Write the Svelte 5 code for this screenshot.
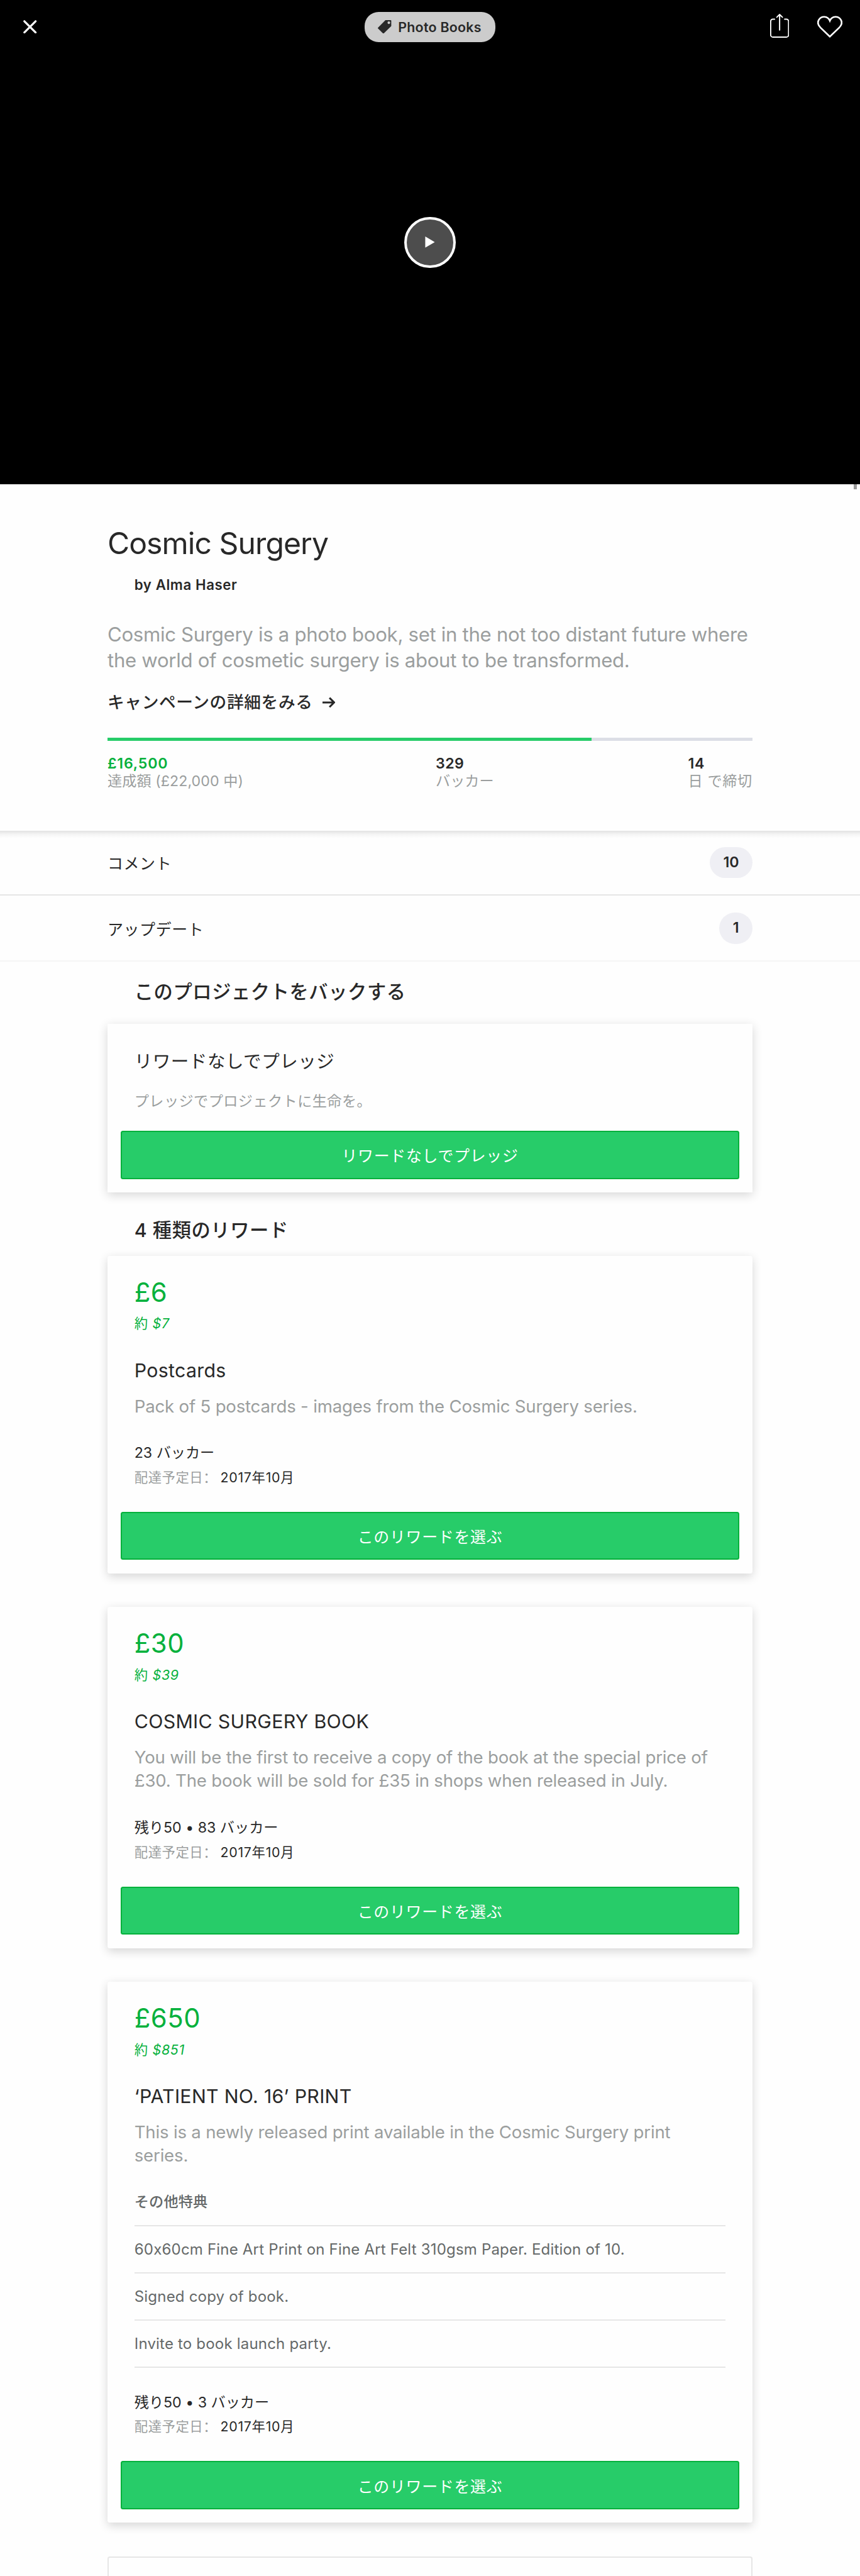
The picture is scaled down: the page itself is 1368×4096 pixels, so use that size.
<script>
  const project = {
    category: 'Photo Books',
    name: 'Cosmic Surgery',
    author: 'by Alma Haser',
    blurb: 'Cosmic Surgery is a photo book, set in the not too distant future where the world of cosmetic surgery is about to be transformed.',
    funded: 75
  };

  const links = [
    { label: 'コメント', count: 10 },
    { label: 'アップデート', count: 1 }
  ];

  const rewards = [
    {
      price: '£6',
      approx: '$7',
      title: 'Postcards',
      desc: 'Pack of 5 postcards - images from the Cosmic Surgery series.',
      extras: [],
      stats: '23 バッカー'
    },
    {
      price: '£30',
      approx: '$39',
      title: 'COSMIC SURGERY BOOK',
      desc: 'You will be the first to receive a copy of the book at the special price of £30. The book will be sold for £35 in shops when released in July.',
      extras: [],
      stats: '残り50 • 83 バッカー'
    },
    {
      price: '£650',
      approx: '$851',
      title: '‘PATIENT NO. 16’ PRINT',
      desc: 'This is a newly released print available in the Cosmic Surgery print series.',
      extras: [
        '60x60cm Fine Art Print on Fine Art Felt 310gsm Paper. Edition of 10.',
        'Signed copy of book.',
        'Invite to book launch party.'
      ],
      stats: '残り50 • 3 バッカー'
    }
  ];
</script>

<div class="page" lang="ja">
  <header class="hero">
    <nav class="topbar">
      <div class="side">
        <svg class="close" width="24" height="24" viewBox="0 0 24 24">
          <path d="M2 2 22 22M22 2 2 22" />
        </svg>
      </div>
      <div class="category">
        <svg width="24" height="24" viewBox="0 0 24 24">
          <path
            fill-rule="evenodd"
            d="M13.6 0H23a1 1 0 0 1 1 1v9.6L10.6 23.7a1 1 0 0 1-1.4 0L.3 15a1 1 0 0 1 0-1.4zM19.7 2.2a2.4 2.4 0 1 0 0 4.8 2.4 2.4 0 0 0 0-4.8z"
          />
        </svg>
        <span>{project.category}</span>
      </div>
      <div class="side end">
        <svg class="share" width="34" height="43" viewBox="0 0 34 43">
          <path d="M8 9.500H5A4 4 0 0 0 1 13.500V37.500a4 4 0 0 0 4 4H29a4 4 0 0 0 4-4V13.500a4 4 0 0 0-4-4H26M17 29V2M12 6 17 1.200 22 6" />
        </svg>
        <svg class="heart" width="45" height="40" viewBox="0 0 45 40">
          <path d="M22.500 37.300 6 21.500C1.500 17 .3 11.500 2.900 7.200 7.200.2 18.500-.300 22.500 9 26.500-.300 37.800.2 42.100 7.200 44.700 11.500 43.500 17 39 21.500z" />
        </svg>
      </div>
    </nav>
    <button class="play" aria-label="再生">
      <svg width="18" height="20" viewBox="0 0 18 20"><path d="M.5 0 17.500 10 .5 20z" /></svg>
    </button>
    <i class="scroll-mark"></i>
  </header>

  <section class="project">
    <h1>{project.name}</h1>
    <p class="author">{project.author}</p>
    <p class="blurb">{project.blurb}</p>
    <a class="details" href="#campaign">
      キャンペーンの詳細をみる
      <svg width="23" height="20" viewBox="0 0 23 20"><path d="M0 10H20M12.500 1.800 20.700 10 12.500 18.200" /></svg>
    </a>
    <div class="progress"><div class="bar" style="width: {project.funded}%"></div></div>
    <dl class="figures">
      <div><dt class="green">£16,500</dt><dd>達成額 (£22,000 中)</dd></div>
      <div><dt>329</dt><dd>バッカー</dd></div>
      <div><dt>14</dt><dd>日 で締切</dd></div>
    </dl>
  </section>

  <section class="links">
    {#each links as link}
      <a class="link" href="#{link.count}">
        <span>{link.label}</span>
        <span class="count">{link.count}</span>
      </a>
    {/each}
  </section>

  <main>
    <h2>このプロジェクトをバックする</h2>
    <article class="card plain">
      <h3>リワードなしでプレッジ</h3>
      <p>プレッジでプロジェクトに生命を。</p>
      <button class="cta">リワードなしでプレッジ</button>
    </article>

    <h2 class="second">4 種類のリワード</h2>
    <div class="rewards">
      {#each rewards as reward}
        <article class="card">
          <div class="body">
            <p class="price">{reward.price}</p>
            <p class="approx">約 <em>{reward.approx}</em></p>
            <h3>{reward.title}</h3>
            <p class="desc">{reward.desc}</p>
            {#if reward.extras.length}
              <ul>
                <li class="label">その他特典</li>
                {#each reward.extras as extra}
                  <li>{extra}</li>
                {/each}
              </ul>
            {/if}
            <p class="stats">{reward.stats}</p>
            <p class="delivery"><span>配達予定日<i lang="zh-Hans">：</i></span>2017年10月</p>
          </div>
          <button class="cta">このリワードを選ぶ</button>
        </article>
      {/each}
      <div class="next"></div>
    </div>
  </main>
</div>

<style>
  :global(body) {
    background: #fefefe;
    overflow: hidden;
  }
  .page {
    --rule: 2.3px;
    zoom: 0.890625;
    width: 1536px;
    height: 4599px;
    overflow: hidden;
    background: #fefefe;
    color: #282828;
    font-family: Inter, 'Noto Sans CJK JP', sans-serif;
    font-feature-settings: 'calt' 0;
    -webkit-font-smoothing: antialiased;
  }
  h1, h2, h3, p, dl, dd, ul {
    margin: 0;
    padding: 0;
    font-weight: 400;
  }
  a {
    color: inherit;
    text-decoration: none;
  }
  svg {
    display: block;
    flex: none;
  }
  button {
    font: inherit;
  }

  .hero {
    position: relative;
    height: 864px;
    background: #000;
    display: flex;
    flex-direction: column;
    align-items: center;
  }
  .topbar {
    box-sizing: border-box;
    width: 100%;
    height: 96px;
    padding: 0 42px;
    display: grid;
    grid-template-columns: 1fr auto 1fr;
    align-items: center;
  }
  .topbar svg {
    fill: none;
    stroke: #fff;
  }
  .side {
    display: flex;
  }
  .side.end {
    justify-content: flex-end;
    gap: 51px;
    margin-right: -11px;
  }
  .topbar .close {
    stroke-width: 3.6;
    stroke-linecap: round;
  }
  .topbar .share {
    stroke-width: 2.2;
    stroke-linecap: round;
    stroke-linejoin: round;
    margin-top: -3px;
  }
  .topbar .heart {
    stroke-width: 3;
  }
  .category {
    box-sizing: border-box;
    width: 234px;
    height: 54px;
    border-radius: 25px;
    background: #ccc;
    display: flex;
    align-items: center;
    padding-left: 24px;
    gap: 12px;
    font-size: 24px;
    font-weight: 600;
    letter-spacing: 0.3px;
    white-space: nowrap;
  }
  .topbar .category svg {
    fill: #282828;
    stroke: none;
  }
  .play {
    box-sizing: border-box;
    width: 91px;
    height: 91px;
    margin: 291px 0 0;
    padding: 0 0 0 1px;
    border: 4.5px solid #fff;
    border-radius: 50%;
    background: #4d4d4d;
    display: flex;
    align-items: center;
    justify-content: center;
  }
  .play svg {
    fill: #fff;
  }
  .scroll-mark {
    position: absolute;
    right: 6px;
    bottom: -10px;
    width: 5px;
    height: 10px;
    background: #9a9a9a;
  }

  .project {
    padding: 73px 192px;
  }
  h1 {
    font-size: 54px;
    line-height: 64px;
    letter-spacing: -1.04px;
  }
  .author {
    margin: 28px 0 0 48px;
    font-size: 25px;
    line-height: 32px;
    font-weight: 600;
    letter-spacing: 0.65px;
  }
  .blurb {
    margin-top: 49px;
    font-size: 35px;
    line-height: 46px;
    letter-spacing: -0.35px;
    color: #9b9e9e;
  }
  .details {
    display: flex;
    align-items: center;
    gap: 17px;
    margin-top: 32px;
    font-size: 30px;
    line-height: 40px;
    font-weight: 500;
    letter-spacing: 0.7px;
  }
  .details svg {
    fill: none;
    stroke: #282828;
    stroke-width: 3.4;
  }
  .progress {
    margin-top: 43px;
    height: 6px;
    background: #dcdee6;
  }
  .bar {
    height: 6px;
    background: #27cc69;
  }
  .figures {
    margin-top: 24px;
    margin-bottom: -1px;
    display: grid;
    grid-template-columns: 586px 451px auto;
    font-size: 26px;
    line-height: 32px;
    white-space: nowrap;
  }
  dt {
    font-weight: 600;
    letter-spacing: 0.6px;
  }
  .green {
    color: #05b13c;
    letter-spacing: 0.9px;
  }
  dd {
    color: #9b9e9e;
    letter-spacing: 0.1px;
  }
  .figures div:last-child dd {
    letter-spacing: 0.7px;
  }

  .links {
    background: linear-gradient(#e2e2e2, #f4f4f4 6px, #fefefe 13px);
  }
  .link {
    box-sizing: border-box;
    height: 116px;
    padding: 0 192px;
    display: flex;
    align-items: center;
    justify-content: space-between;
    border-bottom: var(--rule) solid #e6e6e6;
    font-size: 28px;
    letter-spacing: 0.7px;
  }
  .link + .link {
    height: 118px;
    border-color: #f5f5f5;
  }
  .count {
    height: 56px;
    padding: 0 24px;
    border-radius: 28px;
    background: #efeff4;
    font-size: 26px;
    line-height: 56px;
    font-weight: 600;
    letter-spacing: 0;
  }

  main {
    padding: 0 192px;
  }
  h2 {
    margin: 30px 0 33px 48px;
    font-size: 34px;
    line-height: 48px;
    font-weight: 500;
    letter-spacing: 0.65px;
  }
  h2.second {
    margin: 44px 0 21px 48px;
  }
  .card {
    padding: 37px 24px 24px;
    border-radius: 4px;
    background: #fefefe;
    box-shadow: 0 5px 17px rgba(0, 0, 0, 0.16);
  }
  .plain {
    padding-top: 45px;
    border-radius: 0;
  }
  .plain h3 {
    margin: 0 24px;
    font-size: 32px;
    line-height: 44px;
    letter-spacing: 0.6px;
  }
  .plain p {
    margin: 30px 24px 32px;
    font-size: 26px;
    line-height: 40px;
    letter-spacing: 0.5px;
    color: #9b9e9e;
  }
  .cta {
    box-sizing: border-box;
    display: block;
    width: 100%;
    height: 86px;
    padding: 0;
    border: var(--rule) solid #05b13c;
    border-radius: 4px;
    background: #27cc69;
    color: #fff;
    font-size: 28px;
    letter-spacing: 0.8px;
  }

  .rewards {
    display: grid;
    gap: 60px;
  }
  .body {
    padding: 0 24px;
  }
  .price {
    font-size: 47px;
    line-height: 56px;
    letter-spacing: 0.6px;
    color: #05b13c;
  }
  .approx {
    margin-top: 12px;
    font-size: 24px;
    line-height: 32px;
    letter-spacing: 0.8px;
    color: #05b13c;
  }
  .body h3 {
    margin-top: 46px;
    font-size: 34px;
    line-height: 44px;
    letter-spacing: 0.37px;
  }
  .desc {
    margin-top: 21px;
    font-size: 31px;
    line-height: 42px;
    letter-spacing: -0.22px;
    color: #9b9e9e;
  }
  ul {
    margin-top: 21px;
    list-style: none;
  }
  li {
    box-sizing: border-box;
    height: 84px;
    border-bottom: var(--rule) solid #e6e6e6;
    font-size: 27px;
    line-height: 82px;
    letter-spacing: 0.2px;
    color: #656969;
  }
  li.label {
    font-size: 26px;
    font-weight: 500;
  }
  .stats {
    margin-top: 42px;
    font-size: 26px;
    line-height: 42px;
  }
  .delivery {
    margin: 1px 0 40px;
    font-size: 24px;
    line-height: 42px;
    letter-spacing: 0.8px;
  }
  .delivery span {
    margin-right: 6px;
    letter-spacing: 0.6px;
    color: #9b9e9e;
  }
  .delivery i {
    font-family: 'Noto Sans CJK SC', sans-serif;
    font-style: normal;
    line-height: 0;
  }
  .next {
    height: 60px;
    border: var(--rule) solid #e6e6e6;
    border-bottom: 0;
    border-radius: 4px 4px 0 0;
  }
</style>
